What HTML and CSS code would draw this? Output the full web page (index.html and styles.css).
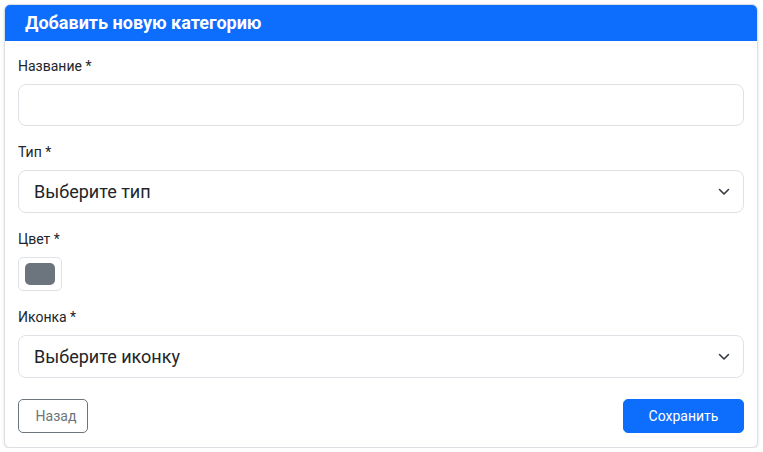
FILE: index.html
```html
<!DOCTYPE html>
<html lang="ru">
<head>
<meta charset="utf-8">
<title>Добавить новую категорию</title>
<link rel="stylesheet" href="styles.css">
</head>
<body>
<div class="card">
  <div class="card-header">
    <h5 class="card-title">Добавить новую категорию</h5>
  </div>
  <form class="card-body">
    <div class="field">
      <label class="label">Название *</label>
      <div class="input"></div>
    </div>
    <div class="field">
      <label class="label">Тип *</label>
      <div class="select"><span>Выберите тип</span>
        <svg class="chev" width="12" height="8" viewBox="0 0 12 8"><path d="M1.5 1.5 6 6l4.5-4.5" fill="none" stroke="#343a40" stroke-width="1.6" stroke-linecap="round" stroke-linejoin="round"/></svg>
      </div>
    </div>
    <div class="field">
      <label class="label">Цвет *</label>
      <div class="color"><span class="swatch"></span></div>
    </div>
    <div class="field">
      <label class="label">Иконка *</label>
      <div class="select"><span>Выберите иконку</span>
        <svg class="chev" width="12" height="8" viewBox="0 0 12 8"><path d="M1.5 1.5 6 6l4.5-4.5" fill="none" stroke="#343a40" stroke-width="1.6" stroke-linecap="round" stroke-linejoin="round"/></svg>
      </div>
    </div>
    <div class="actions">
      <button type="button" class="btn btn-back">Назад</button>
      <button type="button" class="btn btn-save">Сохранить</button>
    </div>
  </form>
</div>
</body>
</html>
```
FILE: styles.css
```css
* { box-sizing: border-box; }
html, body { margin: 0; padding: 0; background: #fff; }
body {
  padding: 4px 5px 0 4px;
  font-family: Roboto, "Noto Sans", sans-serif;
  color: #212529;
}
.card {
  border: 1px solid #dcdfe3;
  border-radius: 6px;
  box-shadow: 0 1px 3px rgba(0,0,0,0.12);
  overflow: hidden;
  background: #fff;
}
.card-header {
  background: #0d6efd;
  height: 37px;
  display: flex;
  align-items: center;
  padding: 0 21px;
  margin: -1px -1px 0 -1px;
}
.card-title {
  margin: 0;
  color: #fff;
  font-size: 18px;
  font-weight: 700;
  line-height: 1;
}
.card-body {
  padding: 15px 13px 14px 13px;
  display: flex;
  flex-direction: column;
}
.field {
  display: flex;
  flex-direction: column;
  margin-bottom: 16px;
}
.label {
  font-size: 14px;
  line-height: 20px;
  margin-bottom: 8px;
}
.input, .select {
  height: 43px;
  border: 1px solid #dee2e6;
  border-radius: 8px;
}
.input { height: 42px; }
.select {
  display: flex;
  align-items: center;
  justify-content: space-between;
  padding: 0 13px 0 15px;
  font-size: 18px;
}
.color {
  width: 44px;
  height: 34px;
  border: 1px solid #dee2e6;
  border-radius: 5px;
  display: flex;
  align-items: center;
  justify-content: center;
}
.swatch {
  width: 30px;
  height: 22px;
  background: #6c757d;
  border-radius: 5px;
}
.actions {
  display: flex;
  justify-content: space-between;
  margin-top: 5px;
}
.btn {
  height: 34px;
  border-radius: 5px;
  font-family: inherit;
  font-size: 14px;
  padding: 0;
  cursor: pointer;
}
.btn-back {
  width: 70px;
  padding-left: 6px;
  background: #fff;
  color: #6c757d;
  border: 1px solid #6c757d;
}
.btn-save {
  width: 121px;
  background: #0d6efd;
  color: #fff;
  border: 1px solid #0d6efd;
}
```
